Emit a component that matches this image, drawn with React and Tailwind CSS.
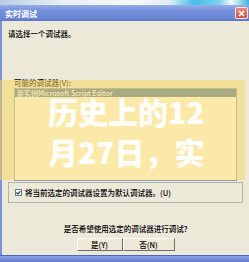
import React from "react";

const App = () => {
  return (
    <div className="relative w-[249px] h-[262px] overflow-hidden bg-[#ece9d8] font-['Noto_Sans_CJK_SC',sans-serif] text-black">
      {/* desktop strip */}
      <div className="h-[5px] bg-[linear-gradient(90deg,#b9cde2_0%,#e9eff5_25%,#f6f8fa_55%,#dfeef6_68%,#46bde6_78%,#7fd2ee_88%,#f2f8fb_93%,#3cb6e2_100%)]" />

      {/* title bar */}
      <div className="h-[16px] flex items-center justify-between pl-[5px] pr-[1px] bg-[linear-gradient(180deg,#97ade9_0%,#7690dc_35%,#6b86d6_85%,#5a73c6_100%)]">
        <span className="text-[8px] leading-[9px] text-white font-bold">实时调试</span>
        <div className="w-[13px] h-[12px] rounded-[2px] border border-white/80 bg-[linear-gradient(180deg,#e48a78,#c9553f)] flex items-center justify-center">
          <svg width="7" height="7" viewBox="0 0 7 7">
            <path d="M1 1L6 6M6 1L1 6" stroke="#fff" strokeWidth="1.6" />
          </svg>
        </div>
      </div>

      {/* dialog body */}
      <div className="h-[234px] flex flex-col border-l-[2px] border-[#7892dd] pt-[8px] text-[7.5px] leading-[9px] font-medium">
        <div className="pl-[6px] h-[9px]">请选择一个调试器。</div>

        <div className="mt-[40px] pl-[12px] h-[9px]">可能的调试器(V):</div>

        <div className="mt-[1px] ml-[12px] w-[223px] h-[93px] bg-white border border-[#8a9fb8]">
          <div className="h-[8px] bg-[#4a75a7] text-white text-[7px] leading-[8px] pl-[2px] whitespace-nowrap">
            新实例Microsoft Script Editor
          </div>
        </div>

        <div className="mt-[1px] ml-[6px] w-[235px] h-[21px] border border-[#b5b2a6] flex items-center pl-[6px] gap-[3px]">
          <div className="w-[7px] h-[7px] bg-white border border-[#5f7f9f] flex items-center justify-center">
            <svg width="5" height="5" viewBox="0 0 5 5">
              <path d="M0.5 2.5L2 4L4.5 1" stroke="#222" strokeWidth="1.1" fill="none" />
            </svg>
          </div>
          <span className="whitespace-nowrap">将当前选定的调试器设置为默认调试器。(U)</span>
        </div>

        <div className="mt-[21px] h-[10px] leading-[10px] text-center whitespace-nowrap">
          是否希望使用选定的调试器进行调试?
        </div>

        <div className="mt-[4px] flex justify-center">
          <button className="w-[46px] h-[13px] bg-[#ece9d8] border-t border-l border-white border-b-[1px] border-r-[1px] border-b-[#6f6d66] border-r-[#6f6d66] text-[7.5px] leading-[10px] font-medium">
            是(Y)
          </button>
          <button className="w-[52px] h-[13px] bg-[#ece9d8] border-t border-l border-white border-b-[1px] border-r-[1px] border-b-[#6f6d66] border-r-[#6f6d66] text-[7.5px] leading-[10px] font-medium">
            否(N)
          </button>
        </div>
      </div>

      {/* bottom frame */}
      <div className="h-[7px] border-t border-[#4d66bb] bg-[linear-gradient(180deg,#8ba3e8_0%,#6f8ad9_60%,#5d78cf_100%)]" />

      {/* banner overlay */}
      <div className="absolute left-0 top-[80px] w-[245px] h-[100px] bg-[rgba(247,215,100,0.55)] pt-[11px] pl-[48px] font-['Noto_Sans_CJK_SC',sans-serif] font-black text-[30px] leading-[40px] text-white/95 whitespace-nowrap">
        <div>历史上的12</div>
        <div>月27日，实</div>
      </div>
    </div>
  );
};

export default App;
